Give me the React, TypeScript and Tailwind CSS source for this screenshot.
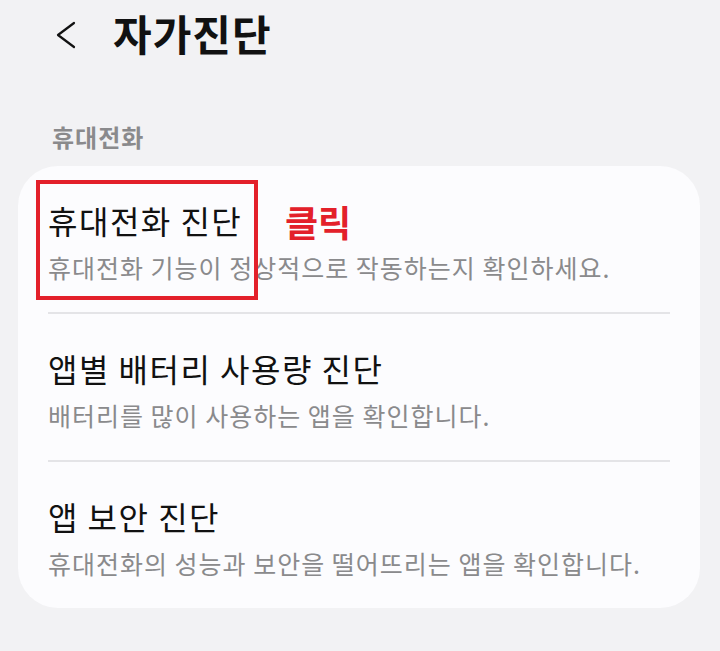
const items = [
  { title: '휴대전화 진단', desc: '휴대전화 기능이 정상적으로 작동하는지 확인하세요.' },
  { title: '앱별 배터리 사용량 진단', desc: '배터리를 많이 사용하는 앱을 확인합니다.' },
  { title: '앱 보안 진단', desc: '휴대전화의 성능과 보안을 떨어뜨리는 앱을 확인합니다.' },
];

export default function App() {
  return (
    <div
      className="w-[720px] h-[651px] bg-[#f2f2f4] overflow-hidden"
      style={{ fontFamily: "'Noto Sans CJK KR', 'Noto Sans', sans-serif" }}
    >
      <header className="flex items-center h-[70px] pl-[55px] gap-[36px]">
        <svg width="22" height="28" viewBox="0 0 22 28" fill="none" className="text-[#111]">
          <polyline points="19,2 3,14 19,26" stroke="currentColor" strokeWidth="2.2" strokeLinecap="round" strokeLinejoin="round" />
        </svg>
        <h1 className="text-[42px] font-bold text-[#111] leading-none tracking-[1px] -mt-[4px]">자가진단</h1>
      </header>

      <div className="mt-[52px] pl-[52px] text-[24px] font-bold text-[#8a8a8c] leading-[30px] tracking-[1px]">휴대전화</div>

      <section className="relative mt-[14px] mx-[18px] w-[682px] bg-[#fcfcfe] rounded-[40px]">
        {items.map((item, i) => (
          <div key={item.title}>
            {i > 0 && <div className="mx-[30px] h-[2px] bg-[#e4e4e7]" />}
            <div className="pl-[30px] pt-[36px] pb-[30px]">
              <div className="text-[32px] text-[#111] leading-[36px] tracking-[1.5px]">{item.title}</div>
              <div className="mt-[14px] text-[25px] text-[#8a8a8c] leading-[30px] tracking-[1px]">{item.desc}</div>
            </div>
          </div>
        ))}

        <div className="absolute left-[18px] top-[14px] w-[222px] h-[120px] border-[4px] border-[#e3202a]" />
        <span className="absolute left-[267px] top-[35px] text-[36px] font-bold text-[#e3202a] leading-[40px]">
          클릭
        </span>
      </section>
    </div>
  );
}
